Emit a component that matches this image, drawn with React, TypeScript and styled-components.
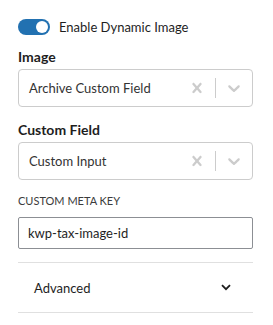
import React from "react";
import styled, { createGlobalStyle } from "styled-components";

const GlobalStyle = createGlobalStyle`
  body {
    margin: 0;
    background: #fff;
    font-family: Lato, "Open Sans", sans-serif;
    color: #1e1e1e;
  }
`;

const Panel = styled.div`
  width: 235px;
  padding: 19px 20px 0 18px;
  display: flex;
  flex-direction: column;
`;

const ToggleRow = styled.label`
  display: flex;
  align-items: center;
  gap: 9px;
  font-size: 13px;
  color: #1e1e1e;
  height: 16px;
`;

const Track = styled.span<{ $on: boolean }>`
  position: relative;
  width: 32px;
  height: 16px;
  border-radius: 8px;
  background: ${(p) => (p.$on ? "#2271b1" : "#ccc")};
  flex: none;
`;

const Thumb = styled.span<{ $on: boolean }>`
  position: absolute;
  top: 2px;
  left: ${(p) => (p.$on ? "18px" : "2px")};
  width: 12px;
  height: 12px;
  border-radius: 50%;
  background: #fff;
`;

const FieldLabel = styled.div`
  font-size: 14px;
  font-weight: 700;
  line-height: 18px;
  color: #1e1e1e;
  margin-bottom: 3px;
`;

const SmallLabel = styled.div`
  font-size: 11px;
  line-height: 14px;
  text-transform: uppercase;
  color: #3c3c3c;
  margin-bottom: 9px;
`;

const Group = styled.div<{ $top: number }>`
  margin-top: ${(p) => p.$top}px;
`;

const Select = styled.div`
  height: 38px;
  box-sizing: border-box;
  border: 1px solid #cccccc;
  border-radius: 4px;
  display: flex;
  align-items: center;
  padding-left: 10px;
  font-size: 13px;
`;

const Value = styled.span`
  flex: 1;
  color: #333;
`;

const Indicators = styled.div`
  display: flex;
  align-items: center;
  height: 100%;
`;

const Icon = styled.span`
  display: flex;
  align-items: center;
  justify-content: center;
  width: 36px;
  color: #cccccc;
`;

const Sep = styled.span`
  width: 1px;
  height: 20px;
  background: #cccccc;
`;

const Input = styled.div`
  height: 32px;
  box-sizing: border-box;
  border: 1px solid #8c8f94;
  border-radius: 2px;
  display: flex;
  align-items: center;
  padding-left: 9px;
  font-size: 13px;
  color: #1e1e1e;
`;

const Accordion = styled.div`
  margin-top: 13px;
  border-top: 1px solid #e0e0e0;
  border-bottom: 1px solid #e0e0e0;
  height: 49px;
  display: flex;
  align-items: center;
  justify-content: space-between;
  padding: 0 22px 0 16px;
  font-size: 13px;
  color: #1e1e1e;
`;

const Cross = () => (
  <svg width="20" height="20" viewBox="0 0 20 20">
    <path
      fill="currentColor"
      d="M14.348 14.849c-.469.469-1.229.469-1.697 0L10 11.819l-2.651 3.029c-.469.469-1.229.469-1.697 0-.469-.469-.469-1.229 0-1.697l2.758-3.15-2.759-3.152c-.469-.469-.469-1.228 0-1.697.469-.469 1.228-.469 1.697 0L10 8.183l2.651-3.031c.469-.469 1.228-.469 1.697 0 .469.469.469 1.229 0 1.697l-2.758 3.152 2.758 3.15c.469.469.469 1.229 0 1.698z"
    />
  </svg>
);

const Down = () => (
  <svg width="20" height="20" viewBox="0 0 20 20">
    <path
      fill="currentColor"
      d="M4.516 7.548c.436-.446 1.043-.481 1.576 0L10 11.295l3.908-3.747c.533-.481 1.141-.446 1.574 0 .436.445.408 1.197 0 1.615-.406.418-4.695 4.502-4.695 4.502-.217.223-.502.335-.787.335s-.57-.112-.789-.335c0 0-4.287-4.084-4.695-4.502s-.436-1.17 0-1.615z"
    />
  </svg>
);

const Chevron = () => (
  <svg width="10" height="7" viewBox="0 0 10 7">
    <path d="M1 1.2 5 5.2 9 1.2" fill="none" stroke="#1e1e1e" strokeWidth="1.8" />
  </svg>
);

const SelectField = ({ value }: { value: string }) => (
  <Select>
    <Value>{value}</Value>
    <Indicators>
      <Icon>
        <Cross />
      </Icon>
      <Sep />
      <Icon>
        <Down />
      </Icon>
    </Indicators>
  </Select>
);

const App = () => {
  return (
    <>
      <GlobalStyle />
      <Panel>
        <ToggleRow>
          <Track $on>
            <Thumb $on />
          </Track>
          Enable Dynamic Image
        </ToggleRow>

        <Group $top={13}>
          <FieldLabel>Image</FieldLabel>
          <SelectField value="Archive Custom Field" />
        </Group>

        <Group $top={14}>
          <FieldLabel>Custom Field</FieldLabel>
          <SelectField value="Custom Input" />
        </Group>

        <Group $top={14}>
          <SmallLabel>Custom meta key</SmallLabel>
          <Input>kwp-tax-image-id</Input>
        </Group>

        <Accordion>
          Advanced
          <Chevron />
        </Accordion>
      </Panel>
    </>
  );
};

export default App;
